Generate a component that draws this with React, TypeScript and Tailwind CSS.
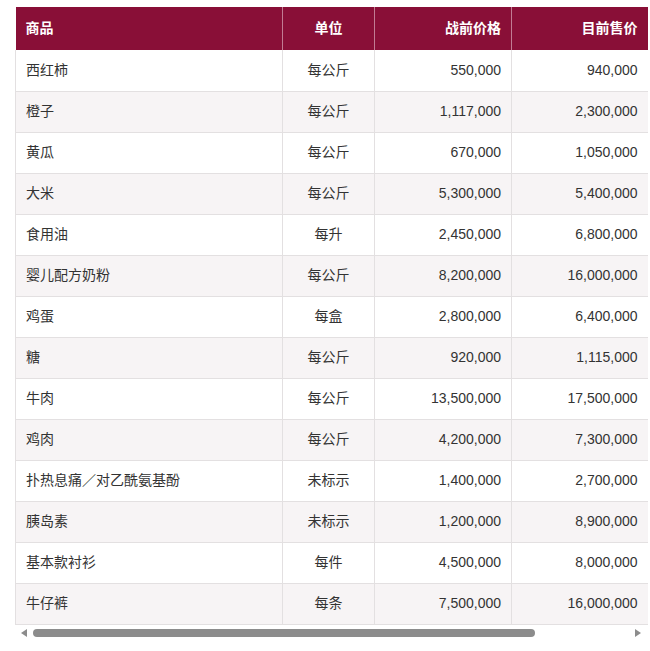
import React from "react";

const rows: [string, string, string, string][] = [
  ["西红柿", "每公斤", "550,000", "940,000"],
  ["橙子", "每公斤", "1,117,000", "2,300,000"],
  ["黄瓜", "每公斤", "670,000", "1,050,000"],
  ["大米", "每公斤", "5,300,000", "5,400,000"],
  ["食用油", "每升", "2,450,000", "6,800,000"],
  ["婴儿配方奶粉", "每公斤", "8,200,000", "16,000,000"],
  ["鸡蛋", "每盒", "2,800,000", "6,400,000"],
  ["糖", "每公斤", "920,000", "1,115,000"],
  ["牛肉", "每公斤", "13,500,000", "17,500,000"],
  ["鸡肉", "每公斤", "4,200,000", "7,300,000"],
  ["扑热息痛／对乙酰氨基酚", "未标示", "1,400,000", "2,700,000"],
  ["胰岛素", "未标示", "1,200,000", "8,900,000"],
  ["基本款衬衫", "每件", "4,500,000", "8,000,000"],
  ["牛仔裤", "每条", "7,500,000", "16,000,000"],
];

const font = { fontFamily: '"Liberation Sans", "Noto Sans CJK SC", sans-serif' };

export default function App() {
  return (
    <div className="w-[650px] h-[651px] bg-white pt-[7px] pl-[15px] overflow-hidden" style={font}>
      <div className="w-[632px]">
        <table className="table-fixed border-collapse w-[632px] text-[14px] text-[#333]">
          <colgroup>
            <col className="w-[267px]" />
            <col className="w-[92px]" />
            <col className="w-[137px]" />
            <col className="w-[136px]" />
          </colgroup>
          <thead>
            <tr className="h-[43px] bg-[#890f37] text-white font-bold">
              <th className="text-left pl-[10px] border-r border-[#c27b93]">商品</th>
              <th className="text-center border-r border-[#c27b93]">单位</th>
              <th className="text-right pr-[10px] border-r border-[#c27b93]">战前价格</th>
              <th className="text-right pr-[10px]">目前售价</th>
            </tr>
          </thead>
          <tbody>
            {rows.map((r, i) => (
              <tr
                key={i}
                className={`h-[41px] border-b border-[#e3e0e1] ${i % 2 === 1 ? "bg-[#f7f4f5]" : "bg-white"}`}
              >
                <td className="text-left pl-[10px] border-l border-r border-[#e3e0e1]">{r[0]}</td>
                <td className="text-center border-r border-[#e3e0e1]">{r[1]}</td>
                <td className="text-right pr-[10px] border-r border-[#e3e0e1]">{r[2]}</td>
                <td className="text-right pr-[10px]">{r[3]}</td>
              </tr>
            ))}
          </tbody>
        </table>
        <div className="h-[16px] flex items-center bg-white">
          <div className="w-[18px] flex justify-center items-center">
            <div className="w-0 h-0 border-y-[4px] border-y-transparent border-r-[6px] border-r-[#8c8c8c]" />
          </div>
          <div className="w-[502px] h-[8px] rounded-full bg-[#8c8c8c]" />
          <div className="flex-1" />
          <div className="w-[18px] flex justify-center items-center">
            <div className="w-0 h-0 border-y-[4px] border-y-transparent border-l-[6px] border-l-[#8c8c8c]" />
          </div>
        </div>
      </div>
    </div>
  );
}
